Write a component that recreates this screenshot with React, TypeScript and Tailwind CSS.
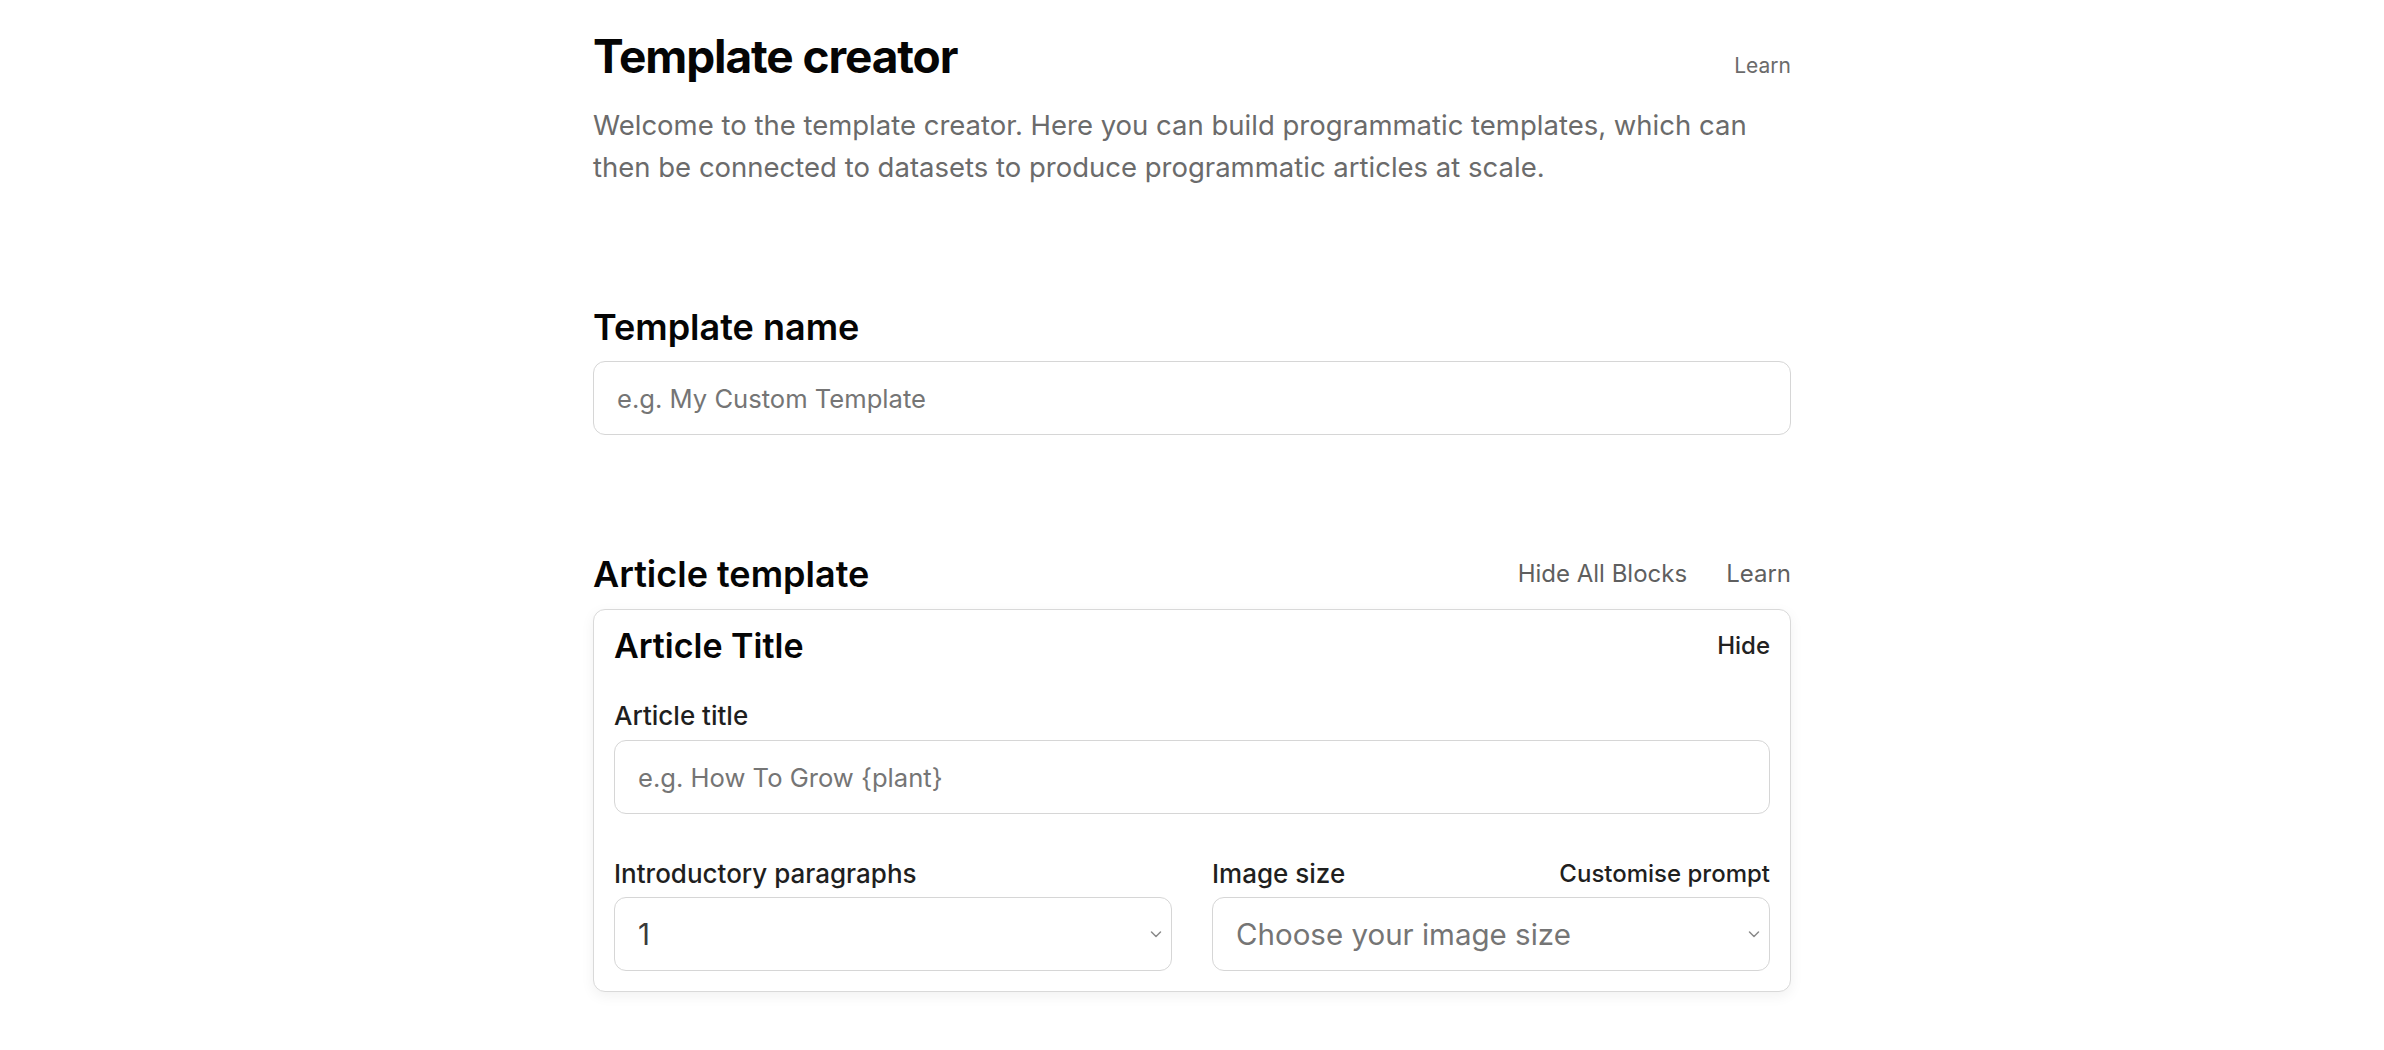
import React, { useState } from "react";

function Chevron() {
  return (
    <svg
      className="pointer-events-none absolute right-[8px] top-1/2 -translate-y-1/2"
      width="16"
      height="16"
      viewBox="0 0 16 16"
      fill="none"
    >
      <path d="M3.5 6 8 10.5 12.5 6" stroke="#8a8a8a" strokeWidth="1.5" strokeLinecap="round" strokeLinejoin="round" />
    </svg>
  );
}

export default function App() {
  const [nome, setNome] = useState("");
  const [titulo, setTitulo] = useState("");
  const [paragrafos, setParagrafos] = useState("1");
  const [tamanho, setTamanho] = useState("");

  return (
    <div className="min-h-screen w-full bg-white font-['Inter',sans-serif] text-black">
      <div className="mx-auto w-[1198px] pt-[29px] pb-10">
        {/* CABEÇALHO */}
        <div className="flex items-baseline justify-between">
          <h1 className="text-[46px] leading-[54px] font-bold tracking-[-1.1px] text-[#050505]">
            Template creator
          </h1>
          <button className="text-[21px] leading-[30px] text-[#6b6b6b] cursor-pointer">Learn</button>
        </div>
        <p className="mt-[21px] text-[27.5px] leading-[42px] text-[#6b6b6b]">
          Welcome to the template creator. Here you can build programmatic templates, which can then be connected to
          datasets to produce programmatic articles at scale.
        </p>

        {/* NOME */}
        <section className="mt-[115px]">
          <h2 className="text-[36px] leading-[48px] font-semibold text-[#050505]">Template name</h2>
          <input
            type="text"
            value={nome}
            onChange={(e) => setNome(e.target.value)}
            placeholder="e.g. My Custom Template"
            className="mt-[10px] h-[74px] w-full rounded-[12px] border-[1.5px] border-[#d6d6d6] px-[23px] text-[25.6px] text-[#222] placeholder:text-[#757575] focus:outline-none"
          />
        </section>

        {/* ARTIGO */}
        <section className="mt-[115px]">
          <div className="flex items-center justify-between">
            <h2 className="text-[36px] leading-[48px] font-semibold text-[#050505]">Article template</h2>
            <div className="flex items-center gap-[39px] text-[24px] text-[#5f5f5f]">
              <button className="cursor-pointer">Hide All Blocks</button>
              <button className="cursor-pointer">Learn</button>
            </div>
          </div>

          <div className="mt-[11px] rounded-[12px] border-[1.5px] border-[#d9d9d9] bg-white px-[20px] pt-[12px] pb-[20px] shadow-[0_4px_14px_rgba(0,0,0,0.06)]">
            <div className="flex items-center justify-between">
              <h3 className="text-[34px] leading-[48px] font-semibold text-[#050505]">Article Title</h3>
              <button className="text-[24px] font-medium text-[#222] cursor-pointer">Hide</button>
            </div>

            <label className="mt-[28px] block">
              <span className="block text-[26px] leading-[36px] font-medium text-[#1f1f1f]">Article title</span>
              <input
                type="text"
                value={titulo}
                onChange={(e) => setTitulo(e.target.value)}
                placeholder="e.g. How To Grow {plant}"
                className="mt-[6px] h-[74px] w-full rounded-[12px] border-[1.5px] border-[#d6d6d6] px-[23px] text-[25.6px] text-[#222] placeholder:text-[#757575] focus:outline-none"
              />
            </label>

            <div className="mt-[42px] grid grid-cols-2 gap-[40px]">
              <div>
                <span className="block text-[26px] leading-[36px] font-medium text-[#1f1f1f]">
                  Introductory paragraphs
                </span>
                <div className="relative mt-[5px]">
                  <select
                    value={paragrafos}
                    onChange={(e) => setParagrafos(e.target.value)}
                    className="h-[74px] w-full appearance-none rounded-[12px] border-[1.5px] border-[#d6d6d6] bg-white px-[23px] text-[29.5px] text-[#3a3a3a] focus:outline-none"
                  >
                    <option value="1">1</option>
                    <option value="2">2</option>
                    <option value="3">3</option>
                  </select>
                  <Chevron />
                </div>
              </div>
              <div>
                <div className="flex items-center justify-between">
                  <span className="block text-[26px] leading-[36px] font-medium text-[#1f1f1f]">Image size</span>
                  <button className="text-[24px] leading-[36px] font-medium text-[#1f1f1f] cursor-pointer">
                    Customise prompt
                  </button>
                </div>
                <div className="relative mt-[5px]">
                  <select
                    value={tamanho}
                    onChange={(e) => setTamanho(e.target.value)}
                    className="h-[74px] w-full appearance-none rounded-[12px] border-[1.5px] border-[#d6d6d6] bg-white px-[23px] text-[29.5px] text-[#757575] focus:outline-none"
                  >
                    <option value="">Choose your image size</option>
                    <option value="square">Square</option>
                    <option value="landscape">Landscape</option>
                  </select>
                  <Chevron />
                </div>
              </div>
            </div>
          </div>
        </section>
      </div>
    </div>
  );
}
